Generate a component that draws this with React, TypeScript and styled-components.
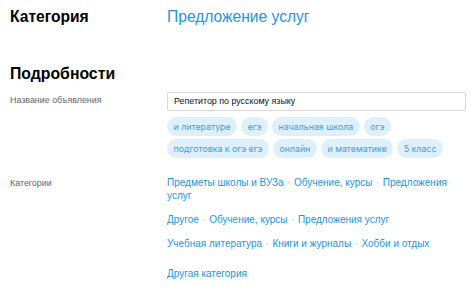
import { Fragment } from "react";
import styled, { createGlobalStyle } from "styled-components";

const GlobalStyle = createGlobalStyle`
  html, body {
    margin: 0;
    padding: 0;
    background: #fff;
  }
  body {
    font-family: "Liberation Sans", Arial, sans-serif;
    color: #000;
  }
`;

const Page = styled.div`
  padding: 7px 8px 0 10px;
  width: 474px;
  box-sizing: border-box;
`;

const Row = styled.div<{ $top?: number }>`
  display: grid;
  grid-template-columns: 157px 1fr;
  margin-top: ${(p) => p.$top ?? 0}px;
`;

const Title = styled.h2`
  margin: 0;
  font-size: 15.6px;
  font-weight: 700;
  line-height: 20px;
`;

const TitleLink = styled.a`
  font-size: 15.6px;
  line-height: 20px;
  color: #1b96e0;
  text-decoration: none;
`;

const Section = styled.h2`
  margin: 36px 0 0;
  font-size: 15.8px;
  font-weight: 700;
  line-height: 22px;
`;

const Label = styled.div<{ $pad?: number }>`
  font-size: 8.9px;
  color: #666;
  padding-top: ${(p) => p.$pad ?? 0}px;
`;

const Input = styled.div`
  box-sizing: border-box;
  height: 19px;
  border: 1px solid #d9d9d9;
  border-radius: 2px;
  padding: 0 6px;
  font-size: 8.9px;
  line-height: 17px;
  color: #111;
`;

const Chips = styled.div`
  display: flex;
  flex-wrap: wrap;
  gap: 3px 4px;
  margin-top: 6px;
  width: 290px;
`;

const Chip = styled.span`
  display: inline-block;
  height: 19px;
  line-height: 19px;
  padding: 0 6.5px;
  border-radius: 10px;
  background: #def0fc;
  color: #3b9fe3;
  font-family: Inter, "Noto Sans", sans-serif;
  font-size: 8.8px;
`;

const Cats = styled.div`
  display: flex;
  flex-direction: column;
  width: 290px;
`;

const CatLine = styled.div<{ $top?: number }>`
  font-size: 10px;
  line-height: 13px;
  color: #1b96e0;
  margin-top: ${(p) => p.$top ?? 0}px;
`;

const Dot = styled.span`
  color: #9cc9ec;
  padding: 0 3.5px;
`;

const chips = [
  "и литературе",
  "егэ",
  "начальная школа",
  "огэ",
  "подготовка к огэ егэ",
  "онлайн",
  "и математике",
  "5 класс",
];

const catGroups = [
  ["Предметы школы и ВУЗа", "Обучение, курсы", "Предложения услуг"],
  ["Другое", "Обучение, курсы", "Предложения услуг"],
  ["Учебная литература", "Книги и журналы", "Хобби и отдых"],
];

const App = () => {
  return (
    <Page>
      <GlobalStyle />
      <Row>
        <Title>Категория</Title>
        <TitleLink>Предложение услуг</TitleLink>
      </Row>
      <Section>Подробности</Section>
      <Row $top={7}>
        <Label $pad={3}>Название объявления</Label>
        <div>
          <Input>Репетитор по русскому языку</Input>
          <Chips>
            {chips.map((c) => (
              <Chip key={c}>{c}</Chip>
            ))}
          </Chips>
        </div>
      </Row>
      <Row $top={18}>
        <Label $pad={2}>Категории</Label>
        <Cats>
          {catGroups.map((g, i) => (
            <CatLine key={i} $top={i === 0 ? 0 : 11}>
              {g.map((c, j) => (
                <Fragment key={j}>
                  {j > 0 && <Dot>·</Dot>}
                  {c}
                </Fragment>
              ))}
            </CatLine>
          ))}
          <CatLine $top={17}>Другая категория</CatLine>
        </Cats>
      </Row>
    </Page>
  );
};

export default App;
